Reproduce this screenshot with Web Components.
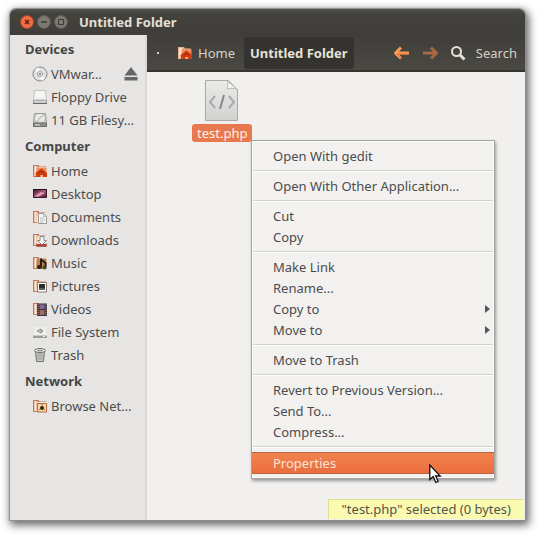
<!DOCTYPE html>
<html lang="en">
<head>
<meta charset="utf-8">
<title>Untitled Folder</title>
<style>
html, body { height: 100%; margin: 0; }
body { background: #fff; font: 13px/20px "Noto Sans", "Open Sans", sans-serif; color: #4c4c4c; }
</style>
</head>
<body>
<file-window>
  <title-bar slot="title">Untitled Folder</title-bar>
  <side-bar slot="side">
    <side-section label="Devices">
      <side-item icon="disc" ejectable>VMwar…</side-item>
      <side-item icon="floppy">Floppy Drive</side-item>
      <side-item icon="drive">11 GB Filesy…</side-item>
    </side-section>
    <side-section label="Computer">
      <side-item icon="home">Home</side-item>
      <side-item icon="desktop">Desktop</side-item>
      <side-item icon="documents">Documents</side-item>
      <side-item icon="downloads">Downloads</side-item>
      <side-item icon="music">Music</side-item>
      <side-item icon="pictures">Pictures</side-item>
      <side-item icon="videos">Videos</side-item>
      <side-item icon="filesystem">File System</side-item>
      <side-item icon="trash">Trash</side-item>
    </side-section>
    <side-section label="Network">
      <side-item icon="network">Browse Net…</side-item>
    </side-section>
  </side-bar>
  <path-bar slot="path"></path-bar>
  <file-item>test.php</file-item>
  <context-menu slot="menu">
    <menu-item>Open With gedit</menu-item>
    <menu-line></menu-line>
    <menu-item>Open With Other Application...</menu-item>
    <menu-line></menu-line>
    <menu-item>Cut</menu-item>
    <menu-item>Copy</menu-item>
    <menu-line></menu-line>
    <menu-item>Make Link</menu-item>
    <menu-item>Rename...</menu-item>
    <menu-item submenu>Copy to</menu-item>
    <menu-item submenu>Move to</menu-item>
    <menu-line></menu-line>
    <menu-item>Move to Trash</menu-item>
    <menu-line></menu-line>
    <menu-item>Revert to Previous Version…</menu-item>
    <menu-item>Send To...</menu-item>
    <menu-item>Compress...</menu-item>
    <menu-line></menu-line>
    <menu-item active>Properties</menu-item>
  </context-menu>
  <status-tip slot="status">"test.php" selected (0 bytes)</status-tip>
</file-window>

<script>
const folder = (extra) => `<svg width="16" height="16" viewBox="0 0 16 16" aria-hidden="true">
  <path d="M1 2h6v1.500h7V14H1z" fill="#c07a5c"/><path d="M2 3h3.500v10H2z" fill="#ecc2a8"/><path d="M3 3h1v10H3z" fill="#f9e8dc"/>
  <path d="M5.500 4H14v9.500H4.500z" fill="#f5ebe4"/>${extra}</svg>`;
const house = `<path d="M5 4.500h9.500V14H4z" fill="#f08a5c"/><path d="M3.500 10 9.500 5.500l5.500 4.500V14H11v-2H8.500v2H4z" fill="#d03c0e"/><path d="M7 10.500 9.500 8l2.500 2.500" fill="none" stroke="#8f2509"/><path d="M8.500 12H11v2H8.500z" fill="#f3b08f"/>`;
const ICONS = {
  disc: `<svg width="16" height="16" viewBox="0 0 16 16" aria-hidden="true"><circle cx="8" cy="8" r="7" fill="#e2e2e0" stroke="#888"/><path d="M8 8 3 3.500A7 7 0 0 1 7 1.500zM8 8l5 4.500A7 7 0 0 1 9 14.500z" fill="#fafafa"/><circle cx="8" cy="8" r="2.500" fill="#eee" stroke="#a0a0a0"/><circle cx="8" cy="8" r="1" fill="#777"/></svg>`,
  floppy: `<svg width="16" height="16" viewBox="0 0 16 16" aria-hidden="true"><path d="M2.500 1.500h11l1 9v4h-13v-4z" fill="#f4f4f3" stroke="#c4c4c2"/><path d="M1.500 11h13v3.500h-13z" fill="#cfcfcd" stroke="#a2a2a0"/><path d="M1 14.500h14" stroke="#666"/></svg>`,
  drive: `<svg width="16" height="16" viewBox="0 0 16 16" aria-hidden="true"><path d="M2.500 1.500h11l1 9v4h-13v-4z" fill="#c8cac7" stroke="#9b9d9a"/><ellipse cx="8" cy="6" rx="5" ry="4" fill="#e8e9e6"/><path d="m5 10 3-4.500L12 3" stroke="#aaa" fill="none"/><path d="M1.500 11h13v3.500h-13z" fill="#8e8f8c" stroke="#6a6a68"/><path d="M3 13h5" stroke="#ddd"/></svg>`,
  home: folder(house),
  desktop: `<svg width="16" height="16" viewBox="0 0 16 16" aria-hidden="true"><defs><linearGradient id="g" x1="0" y1="0" x2="1" y2="1"><stop offset="0" stop-color="#3c0d2a"/><stop offset=".5" stop-color="#b0587c"/><stop offset="1" stop-color="#4b1230"/></linearGradient></defs><path d="M1.500 3.500h13v8h-13z" fill="url(#g)" stroke="#3a1428"/><path d="M1 3.500h14" stroke="#1e1418"/><path d="m3 10 6-4 4 1-7 4z" fill="#f0bccb" opacity=".7"/></svg>`,
  documents: folder(`<path d="M6.500 4.500h5l3 3v7h-8z" fill="#f6f6f4" stroke="#999"/><path d="M11.500 4.500v3h3M8 9h4M8 11h5M8 13h3" fill="none" stroke="#bbb"/>`),
  downloads: folder(`<path d="M5 12h10v2H5z" fill="#c33"/><path d="M8 4.500h4v4h2.500L10 13 5.500 8.500H8z" fill="#f4f4f2" stroke="#888"/><path d="M4.500 11.500v3h10v-3" fill="none" stroke="#9c6a59"/>`),
  music: folder(`<path d="M5 4h9.500v10H4z" fill="#c28248"/><path d="M9 3.500v8M9 4.500 13.500 8v4" fill="none" stroke="#222" stroke-width="2"/><ellipse cx="7.500" cy="12" rx="2.500" ry="2" fill="#222"/><circle cx="12.500" cy="12.500" r="2" fill="#354f32"/>`),
  pictures: folder(`<path d="M5.500 4.500h9v9.500h-9z" fill="#fff" stroke="#8a7a70"/><path d="M7 6h6v6H7z" fill="#292d27"/><path d="M7 10h6v2H7z" fill="#58645a"/>`),
  videos: folder(`<path d="M5 2.500h10V15H5z" fill="#3a323c"/><path d="M7.500 3.500h5v4.500h-5z" fill="#806c93"/><path d="M7.500 9h5v5h-5z" fill="#a36b5c"/><path d="M6 3v12M14 3v12" stroke="#a99994" stroke-dasharray="1 1"/>`),
  filesystem: `<svg width="16" height="16" viewBox="0 0 16 16" aria-hidden="true"><path d="M3 3h10l2 8H1z" fill="#eeefed"/><path d="m5 7 4-2v4zM9 5l2 2-2 2" fill="#cfd2cf" stroke="#8c918e"/><path d="M1 11h14v3H1z" fill="#9a9c99"/><path d="M1 11.500h14" stroke="#c6c8c5"/><path d="M11 12.500h2" stroke="#eee"/></svg>`,
  trash: `<svg width="16" height="16" viewBox="0 0 16 16" aria-hidden="true"><path d="M3.500 4h9l-1 10.500h-7z" fill="#c9cac7" stroke="#737572"/><path d="M6 6v7M8 6v7M10 6v7" stroke="#9a9c99"/><ellipse cx="8" cy="3.500" rx="5.500" ry="2" fill="#ecedea" stroke="#6d6f6c"/><ellipse cx="8" cy="3.500" rx="3" ry="1" fill="#999"/></svg>`,
  network: folder(`<path d="M5.500 5.500h9v8.500h-9z" fill="#f5d9a5" stroke="#b76b3a"/><circle cx="10" cy="10" r="2" fill="#2d2416"/><path d="M10 6v2M7 12l1-1M13 12l-1-1" stroke="#8f8238"/>`),
  pathHome: `<svg width="16" height="16" viewBox="0 0 16 16" aria-hidden="true"><path d="M1 2h6l1 1.500h6V14H1z" fill="#e7b28f"/><path d="M2 3h3v10H2z" fill="#f8dcc5"/>${house}</svg>`
};

function define(name, css, html, setup) {
  const template = document.createElement('template');
  template.innerHTML = `<style>*{box-sizing:border-box}button,a,input{font:inherit;color:inherit}button{border:0;padding:0;background:none}svg{display:block;flex:none}${css}</style>${html}`;
  customElements.define(name, class extends HTMLElement {
    constructor() {
      super();
      this.attachShadow({ mode: 'open' }).append(template.content.cloneNode(true));
    }
    connectedCallback() { if (setup) setup(this, this.shadowRoot); }
  });
}

define('file-window', `
  :host { display: grid; box-sizing: border-box; min-height: 100vh; padding: 9px 15px 15px 10px; }
  .frame { display: grid; grid-template: auto auto 1fr / 137px 1fr; position: relative; background: #f1f0ee;
    border-radius: 6px 6px 0 0; box-shadow: 0 0 1px 1px #8e8e8c, 2px 3px 8px 2px #666; }
  .title { grid-area: 1 / 1 / 2 / 3; }
  .side { grid-area: 2 / 1 / 4 / 2; background: #e6e5e3; border-right: 2px solid #dbdad8; }
  .path { grid-area: 2 / 2 / 3 / 3; }
  main { grid-area: 3 / 2 / 4 / 3; padding: 7px 0 0 45px; display: flex; align-items: flex-start; }
  .menu { position: absolute; left: 241px; top: 131px; }
  .status { position: absolute; right: 1px; bottom: 1px; }`,
  `<div class="frame"><header class="title"><slot name="title"></slot></header><aside class="side"><slot name="side"></slot></aside>
   <nav class="path" aria-label="Location"><slot name="path"></slot></nav><main><slot></slot></main>
   <div class="menu"><slot name="menu"></slot></div><div class="status"><slot name="status"></slot></div></div>`);

define('title-bar', `
  :host { display: flex; align-items: center; gap: 3px; height: 26px; padding: 0 10px; box-sizing: border-box;
    border-radius: 6px 6px 0 0; background: linear-gradient(#55544e, #43423d 4px, #3f3e3a); color: #e3e0d8; }
  h1 { margin: 0 0 0 8px; padding-bottom: 1px; font-size: 13px; line-height: 20px; font-weight: 700; }
  button { width: 14px; height: 14px; }`,
  `<button aria-label="Close"><svg width="14" height="14" viewBox="0 0 14 14"><circle cx="7" cy="7" r="6.500" fill="#ee6b43" stroke="#a74627"/><path d="m5 5 4 4M9 5 5 9" stroke="#5a1f0d" stroke-width="1.500"/></svg></button>
   <button aria-label="Minimize"><svg width="14" height="14" viewBox="0 0 14 14"><circle cx="7" cy="7" r="6.500" fill="#7b7972" stroke="#5d5b55"/><path d="M4 7h6" stroke="#3a3935" stroke-width="1.500"/></svg></button>
   <button aria-label="Maximize"><svg width="14" height="14" viewBox="0 0 14 14"><circle cx="7" cy="7" r="6.500" fill="#7b7972" stroke="#5d5b55"/><path d="M4.500 4.500h5v5h-5z" fill="none" stroke="#3a3935"/></svg></button>
   <h1><slot></slot></h1>`);

define('path-bar', `
  :host { display: flex; align-items: center; height: 37px; padding: 0 8px 0 9px; box-sizing: border-box; color: #d6d2c9;
    background: linear-gradient(#3f3e3a, #4a4944); border-bottom: 2px solid #35342f; }
  .dot { width: 4px; } .dot::after { content: ""; display: block; width: 2px; height: 2px; margin: 0 auto; background: #d0ccc4; }
  .home { display: flex; align-items: center; gap: 5px; margin-left: 17px; }
  .here { margin-left: 9px; height: 32px; padding: 0 6px; font-weight: 700; background: #34332f; border-radius: 3px; color: #e6e2d9; white-space: nowrap; }
  .tools { margin-left: auto; display: flex; align-items: center; }
  .fwd { margin-left: 10px; }
  .search { display: flex; align-items: center; gap: 10px; margin-left: 11px; }`,
  `<button class="dot" aria-label="Parent folders"></button>
   <button class="home">${ICONS.pathHome}Home</button>
   <button class="here" aria-current="page">Untitled Folder</button>
   <div class="tools">
     <button aria-label="Back"><svg width="18" height="16" viewBox="0 0 18 16"><path d="M16 8H3M8 2.500 2.500 8 8 13.500" fill="none" stroke="#f49b57" stroke-width="3" stroke-linejoin="round"/><path d="M16 9H4l4 4" fill="none" stroke="#e97335"/></svg></button>
     <button class="fwd" aria-label="Forward"><svg width="18" height="16" viewBox="0 0 18 16"><path d="M2 8h13M10 2.500 15.500 8 10 13.500" fill="none" stroke="#a8683f" stroke-width="3" stroke-linejoin="round"/><path d="M2 8h11" fill="none" stroke="#a16e56"/></svg></button>
     <button class="search"><svg width="16" height="16" viewBox="0 0 16 16" aria-hidden="true"><circle cx="6.500" cy="6.500" r="4.500" fill="none" stroke="#e5e2da" stroke-width="2"/><path d="m10 10 4.500 4.500" stroke="#e5e2da" stroke-width="3"/></svg>Search</button>
   </div>`);

define('side-bar', `:host { display: block; }`, `<slot></slot>`);

define('side-section', `:host { display: block; padding-bottom: 1px; } h2 { margin: 0; padding: 4px 0 3px 15px; font-size: 13px; line-height: 20px; font-weight: 700; color: #454545; }`,
  `<h2></h2><slot></slot>`, (host, root) => { root.querySelector('h2').textContent = host.getAttribute('label'); });

define('side-item', `
  :host { display: flex; align-items: center; height: 23px; padding: 0 7px 0 22px; }
  a { flex: 1; display: flex; align-items: center; gap: 3px; text-decoration: none; white-space: nowrap; }
  button { display: none; } :host([ejectable]) button { display: block; }`,
  `<a href="#"><span class="icon"></span><span><slot></slot></span></a>
   <button aria-label="Eject"><svg width="14" height="14" viewBox="0 0 14 14"><path d="m7 0 6.500 8.500H.5z" fill="#666"/><path d="M.5 10h13v3.500H.5z" fill="#666"/></svg></button>`,
  (host, root) => { root.querySelector('.icon').innerHTML = ICONS[host.getAttribute('icon')]; });

define('file-item', `
  :host { display: flex; flex-direction: column; align-items: center; gap: 1px; }
  span { padding: 0 5px; line-height: 18px; border-radius: 3px; background: #e8794f; color: #fbeee6; }`,
  `<svg width="36" height="44" viewBox="0 0 36 44" aria-hidden="true">
    <defs><linearGradient id="p" x1="0" y1="0" x2="0" y2="1"><stop offset="0" stop-color="#eaeae9"/><stop offset="1" stop-color="#d2d2d1"/></linearGradient></defs>
    <path d="M1.500 1.500h23l9 9v31h-32z" fill="url(#p)" stroke="#a9a9a8"/>
    <path d="M23.500 2c1 3 0 6-.5 8 3-1 7-1 10 0z" fill="#f6f6f5" stroke="#b5b5b4"/>
    <path d="m11 17-5 6 5 6M25 17l5 6-5 6" fill="none" stroke="#aaa" stroke-width="2"/><path d="m20 16-4 14" stroke="#888" stroke-width="2"/></svg>
   <span><slot></slot></span>`);

define('context-menu', `
  :host { display: block; box-sizing: border-box; min-width: 244px; padding: 5px 0 4px; border: 1px solid #a3a3a1; background: #f2f1f0; box-shadow: inset 0 0 0 1px #fbfbfa, 1px 2px 3px #999; }`,
  `<slot></slot>`, (host) => host.setAttribute('role', 'menu'));

define('menu-item', `
  :host { display: block; }
  button { width: 100%; height: 21px; padding: 0 4px 2px 21px; display: flex; align-items: center; justify-content: space-between; white-space: nowrap; }
  svg { display: none; } :host([submenu]) svg { display: block; }
  :host([active]) button { height: 22px; padding-bottom: 0; background: linear-gradient(#f1834f, #eb6c3d); color: #fbe4d6; box-shadow: inset 0 1px #b9663f, inset 0 -1px #b9663f; }`,
  `<button role="menuitem"><span><slot></slot></span><svg width="5" height="8" viewBox="0 0 5 8" aria-hidden="true"><path d="M0 0v8l5-4z" fill="#555"/></svg></button>`);

define('menu-line', `:host { display: block; padding: 3px 1px 4px; } div { height: 2px; background: linear-gradient(#d2d1cf 50%, #fcfcfb 50%); }`, `<div role="separator"></div>`);

define('status-tip', `:host { display: block; padding: 0 13px; line-height: 19px; border: 1px solid #dede94; border-width: 1px 0 0 1px; background: #fbfab1; color: #55554a; }`, `<slot></slot>`);

define('mouse-pointer', `:host { position: absolute; left: 429px; top: 464px; pointer-events: none; }`,
  `<svg width="13" height="20" viewBox="0 0 13 20" aria-hidden="true"><path d="M.8 1v14.500l3.400-3 2.600 6 2.400-1-2.500-5.500h4.500z" fill="#fff" stroke="#111" stroke-width="1.300"/></svg>`);
document.body.append(document.createElement('mouse-pointer'));
</script>
</body>
</html>
